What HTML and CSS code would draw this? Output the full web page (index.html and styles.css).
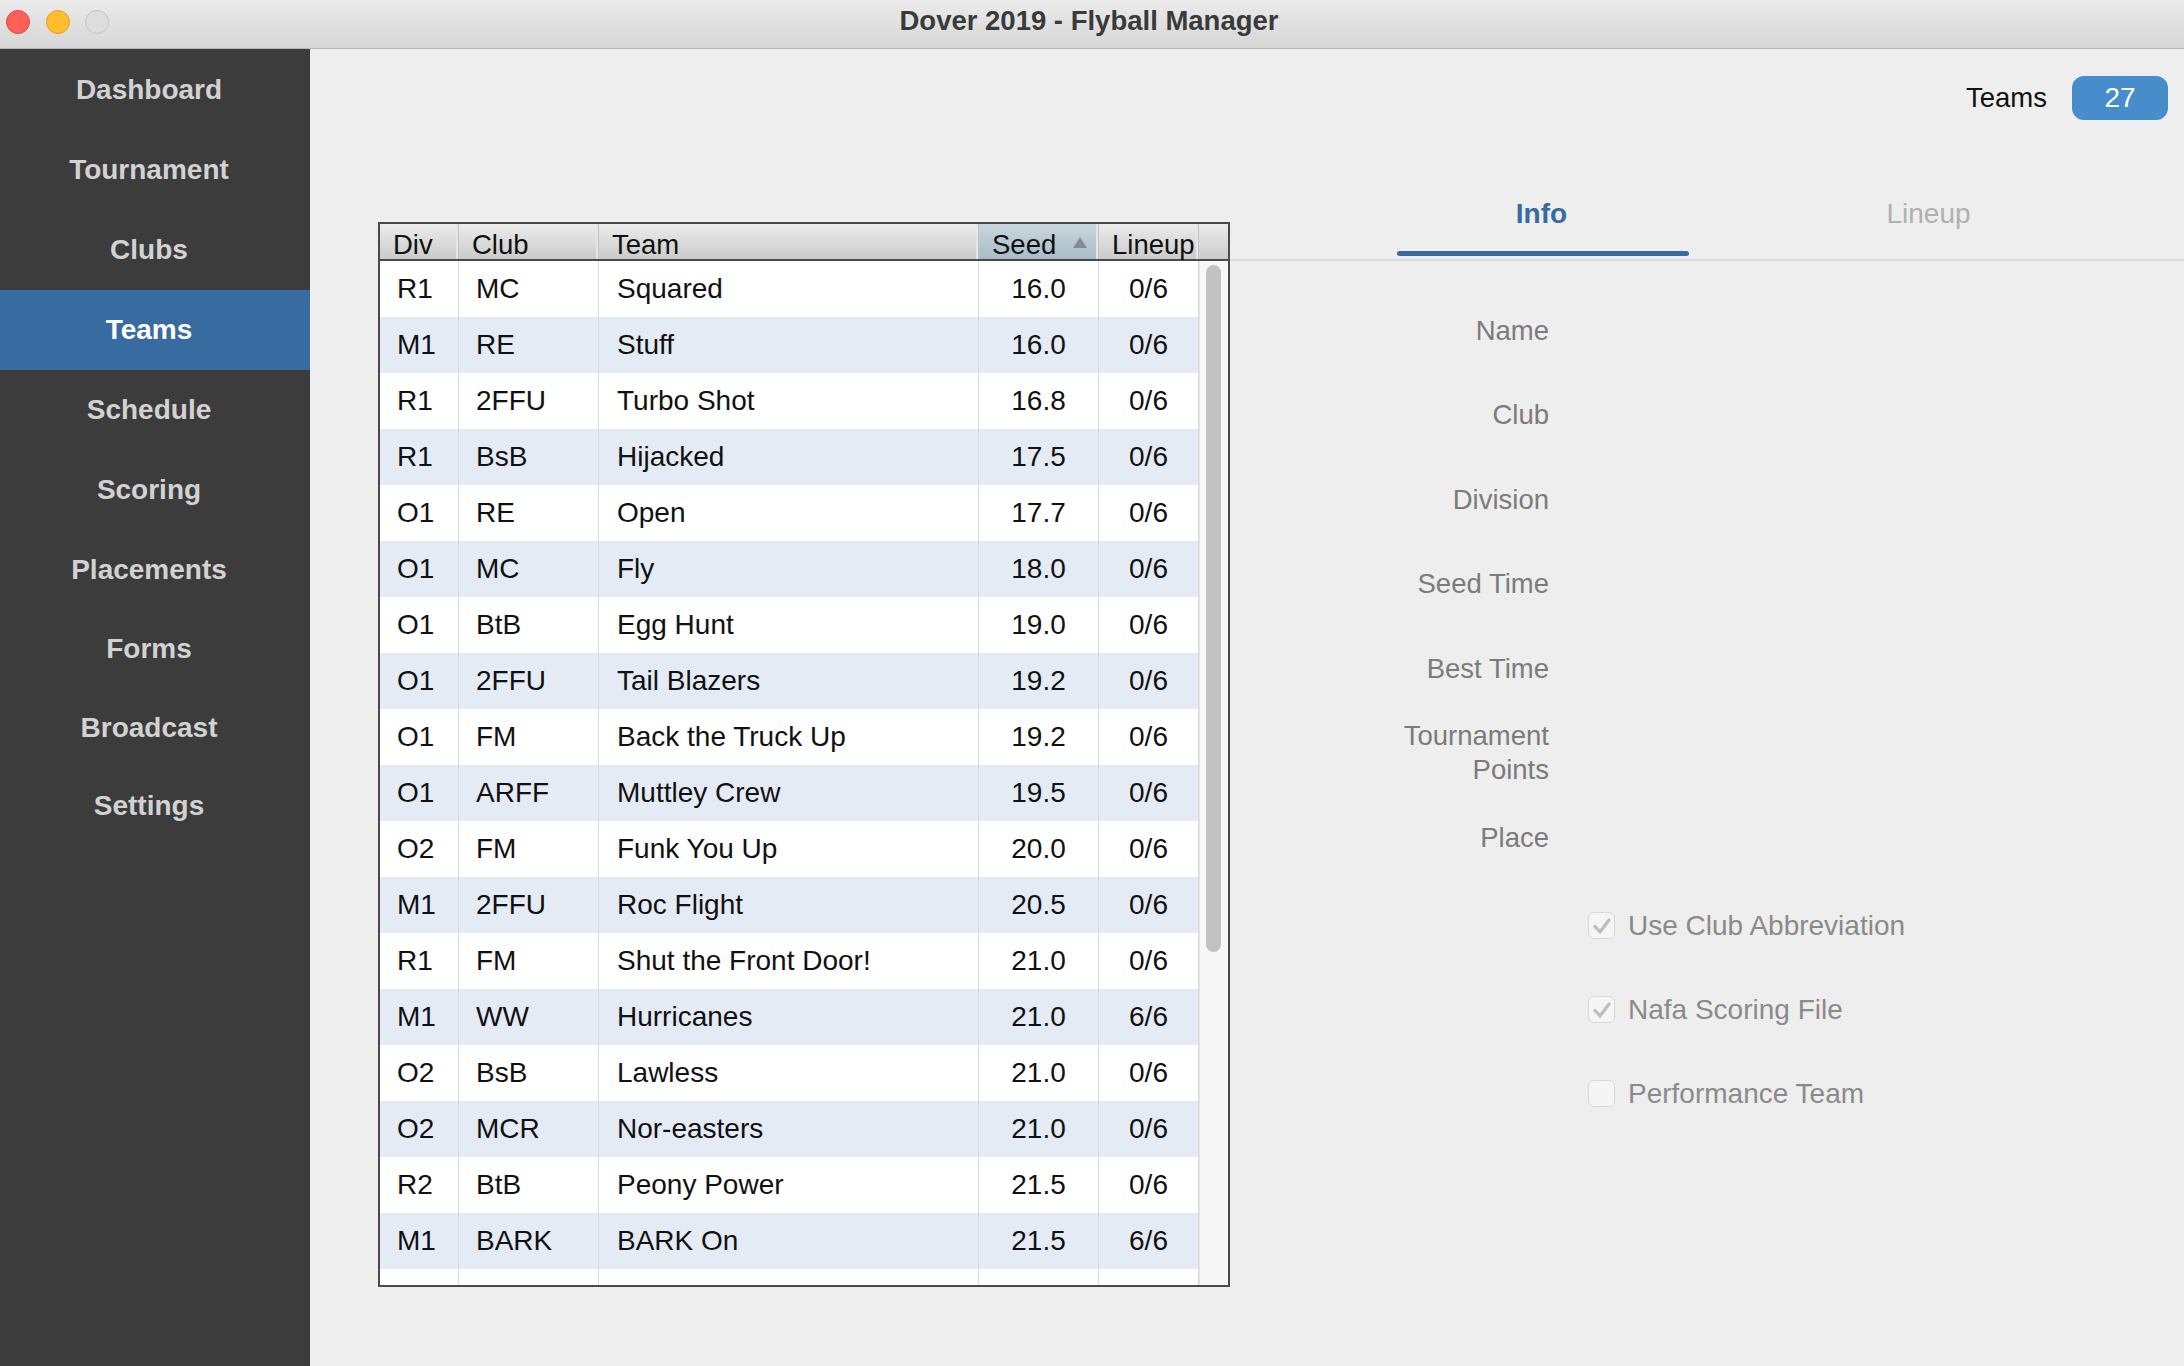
FILE: index.html
```html
<!DOCTYPE html>
<html>
<head>
<meta charset="utf-8">
<title>Dover 2019 - Flyball Manager</title>
<link rel="stylesheet" href="styles.css">
</head>
<body>
<div class="window">
  <header class="titlebar">
    <div class="lights">
      <span class="light red"></span>
      <span class="light yellow"></span>
      <span class="light grey"></span>
    </div>
    <div class="title">Dover 2019 - Flyball Manager</div>
  </header>
  <div class="app">
    <nav class="sidebar">
      <div class="nav-item">Dashboard</div>
      <div class="nav-item">Tournament</div>
      <div class="nav-item">Clubs</div>
      <div class="nav-item active">Teams</div>
      <div class="nav-item">Schedule</div>
      <div class="nav-item">Scoring</div>
      <div class="nav-item">Placements</div>
      <div class="nav-item">Forms</div>
      <div class="nav-item">Broadcast</div>
      <div class="nav-item">Settings</div>
    </nav>
    <main class="main">
      <div class="topbar">
        <span class="count-label">Teams</span>
        <span class="badge">27</span>
      </div>
      <div class="content">
        <section class="grid">
          <div class="grid-head">
            <div class="hcell">Div</div>
            <div class="hcell">Club</div>
            <div class="hcell">Team</div>
            <div class="hcell sorted"><span>Seed</span><span class="sort-arrow"></span></div>
            <div class="hcell">Lineup</div>
            <div class="hcell filler"></div>
          </div>
          <div class="grid-body">
            <div class="rows">
              <div class="row"><div class="c div">R1</div><div class="c club">MC</div><div class="c team">Squared</div><div class="c num">16.0</div><div class="c num">0/6</div></div>
              <div class="row"><div class="c div">M1</div><div class="c club">RE</div><div class="c team">Stuff</div><div class="c num">16.0</div><div class="c num">0/6</div></div>
              <div class="row"><div class="c div">R1</div><div class="c club">2FFU</div><div class="c team">Turbo Shot</div><div class="c num">16.8</div><div class="c num">0/6</div></div>
              <div class="row"><div class="c div">R1</div><div class="c club">BsB</div><div class="c team">Hijacked</div><div class="c num">17.5</div><div class="c num">0/6</div></div>
              <div class="row"><div class="c div">O1</div><div class="c club">RE</div><div class="c team">Open</div><div class="c num">17.7</div><div class="c num">0/6</div></div>
              <div class="row"><div class="c div">O1</div><div class="c club">MC</div><div class="c team">Fly</div><div class="c num">18.0</div><div class="c num">0/6</div></div>
              <div class="row"><div class="c div">O1</div><div class="c club">BtB</div><div class="c team">Egg Hunt</div><div class="c num">19.0</div><div class="c num">0/6</div></div>
              <div class="row"><div class="c div">O1</div><div class="c club">2FFU</div><div class="c team">Tail Blazers</div><div class="c num">19.2</div><div class="c num">0/6</div></div>
              <div class="row"><div class="c div">O1</div><div class="c club">FM</div><div class="c team">Back the Truck Up</div><div class="c num">19.2</div><div class="c num">0/6</div></div>
              <div class="row"><div class="c div">O1</div><div class="c club">ARFF</div><div class="c team">Muttley Crew</div><div class="c num">19.5</div><div class="c num">0/6</div></div>
              <div class="row"><div class="c div">O2</div><div class="c club">FM</div><div class="c team">Funk You Up</div><div class="c num">20.0</div><div class="c num">0/6</div></div>
              <div class="row"><div class="c div">M1</div><div class="c club">2FFU</div><div class="c team">Roc Flight</div><div class="c num">20.5</div><div class="c num">0/6</div></div>
              <div class="row"><div class="c div">R1</div><div class="c club">FM</div><div class="c team">Shut the Front Door!</div><div class="c num">21.0</div><div class="c num">0/6</div></div>
              <div class="row"><div class="c div">M1</div><div class="c club">WW</div><div class="c team">Hurricanes</div><div class="c num">21.0</div><div class="c num">6/6</div></div>
              <div class="row"><div class="c div">O2</div><div class="c club">BsB</div><div class="c team">Lawless</div><div class="c num">21.0</div><div class="c num">0/6</div></div>
              <div class="row"><div class="c div">O2</div><div class="c club">MCR</div><div class="c team">Nor-easters</div><div class="c num">21.0</div><div class="c num">0/6</div></div>
              <div class="row"><div class="c div">R2</div><div class="c club">BtB</div><div class="c team">Peony Power</div><div class="c num">21.5</div><div class="c num">0/6</div></div>
              <div class="row"><div class="c div">M1</div><div class="c club">BARK</div><div class="c team">BARK On</div><div class="c num">21.5</div><div class="c num">6/6</div></div>
              <div class="row"><div class="c div">O1</div><div class="c club">BARK</div><div class="c team">Bark Side</div><div class="c num">21.5</div><div class="c num">0/6</div></div>
            </div>
            <div class="scrolltrack"><div class="thumb"></div></div>
          </div>
        </section>
        <section class="details">
          <div class="tabs">
            <div class="tab active">Info</div>
            <div class="tab">Lineup</div>
          </div>
          <div class="form">
            <div class="label">Name</div><div class="value"></div>
            <div class="label">Club</div><div class="value"></div>
            <div class="label">Division</div><div class="value"></div>
            <div class="label">Seed Time</div><div class="value"></div>
            <div class="label">Best Time</div><div class="value"></div>
            <div class="label two">Tournament<br>Points</div><div class="value"></div>
            <div class="label">Place</div><div class="value"></div>
          </div>
          <div class="checks">
            <div class="check">
              <span class="box"><svg viewBox="0 0 24 24" width="24" height="24"><path d="M5 12.5 L10 18 L19 6" fill="none" stroke="#bdbdbd" stroke-width="3.2" stroke-linecap="round" stroke-linejoin="round"/></svg></span>
              <span class="check-text">Use Club Abbreviation</span>
            </div>
            <div class="check">
              <span class="box"><svg viewBox="0 0 24 24" width="24" height="24"><path d="M5 12.5 L10 18 L19 6" fill="none" stroke="#bdbdbd" stroke-width="3.2" stroke-linecap="round" stroke-linejoin="round"/></svg></span>
              <span class="check-text">Nafa Scoring File</span>
            </div>
            <div class="check">
              <span class="box"></span>
              <span class="check-text">Performance Team</span>
            </div>
          </div>
        </section>
      </div>
    </main>
  </div>
</div>
</body>
</html>
```
FILE: styles.css
```css
* { box-sizing: border-box; }
html, body {
  margin: 0;
  padding: 0;
  width: 2184px;
  height: 1366px;
  overflow: hidden;
  font-family: "Liberation Sans", Arial, Helvetica, sans-serif;
}
.window {
  width: 2184px;
  height: 1366px;
  display: flex;
  flex-direction: column;
  background: #eeeeee;
}
.titlebar {
  height: 49px;
  flex: none;
  background: linear-gradient(#ebebeb, #d6d6d6);
  border-bottom: 1px solid #b5b5b5;
  display: flex;
  align-items: center;
  position: relative;
}
.lights {
  display: flex;
  gap: 15.5px;
  padding-left: 6px;
  margin-top: -4px;
}
.light {
  width: 24px;
  height: 24px;
  border-radius: 50%;
  display: block;
}
.light.red { background: #fe5f57; border: 1px solid #e2463f; }
.light.yellow { background: #febc2e; border: 1px solid #dfa024; }
.light.grey { background: #dddddd; border: 1px solid #c4c4c4; }
.title {
  position: absolute;
  left: 0;
  right: 6px;
  top: 0;
  text-align: center;
  line-height: 42px;
  font-size: 27.5px;
  font-weight: bold;
  color: #3a3a3a;
}
.app {
  flex: 1;
  display: flex;
  min-height: 0;
}
.sidebar {
  width: 310px;
  flex: none;
  background: #3c3c3c;
  padding-top: 1px;
}
.nav-item {
  height: 80px;
  line-height: 80px;
  text-align: center;
  padding-right: 12px;
  font-size: 28px;
  font-weight: bold;
  color: #d2d2d2;
}
.nav-item:nth-child(n+8) { height: 78.5px; line-height: 78.5px; }
.nav-item.active {
  background: #386b9f;
  color: #ffffff;
}
.main {
  flex: 1;
  display: flex;
  flex-direction: column;
  min-width: 0;
}
.topbar {
  display: flex;
  justify-content: flex-end;
  align-items: center;
  gap: 25px;
  padding: 27px 16px 0 0;
  height: 71px;
}
.count-label {
  font-size: 27.5px;
  color: #111111;
}
.badge {
  width: 96px;
  height: 44px;
  border-radius: 12px;
  background: #478ccb;
  color: #ffffff;
  font-size: 28px;
  line-height: 44px;
  text-align: center;
}
.content {
  display: flex;
  align-items: flex-start;
}
.grid {
  margin-left: 68px;
  margin-top: 102px;
  width: 852px;
  height: 1065px;
  border: 2px solid #4a4a4a;
  background: #ffffff;
  display: flex;
  flex-direction: column;
  overflow: hidden;
}
.grid-head {
  display: grid;
  grid-template-columns: 79px 140px 380px 120px 100px 29px;
  height: 37px;
  border-bottom: 2px solid #4a4a4a;
  background: linear-gradient(#ececec, #cbcbcb);
  flex: none;
}
.hcell {
  display: flex;
  align-items: flex-end;
  padding: 0 0 0 13px;
  font-size: 27.5px;
  line-height: 29px;
  color: #111111;
  border-right: 1px solid #c2c2c2;
  box-shadow: inset -2px 0 0 #e6e6e6;
}
.hcell.filler { border-right: none; box-shadow: none; }
.hcell.sorted {
  background: linear-gradient(#c9d6df, #a9bcc7);
  justify-content: space-between;
}
.sort-arrow {
  width: 0;
  height: 0;
  border-left: 7px solid transparent;
  border-right: 7px solid transparent;
  border-bottom: 11px solid #858c90;
  margin: 0 11px 11px 0;
}
.grid-body {
  flex: 1;
  display: flex;
  min-height: 0;
}
.rows {
  width: 819px;
  flex: none;
}
.row {
  display: grid;
  grid-template-columns: 79px 140px 380px 120px 100px;
  height: 56px;
  background: #ffffff;
}
.row:nth-child(even) { background: #e5ebf5; }
.c {
  font-size: 28px;
  line-height: 56px;
  color: #111111;
  border-right: 1px solid #dadada;
  white-space: nowrap;
  overflow: hidden;
}
.c.div { padding-left: 17px; }
.c.club { padding-left: 17px; }
.c.team { padding-left: 18px; }
.c.num { text-align: center; }
.scrolltrack {
  flex: 1;
  background: #f7f7f7;
  border-left: 1px solid #e4e4e4;
  padding: 4px 0 0 6px;
}
.thumb {
  width: 15px;
  height: 687px;
  border-radius: 8px;
  background: #c2c2c2;
}
.details {
  flex: 1;
  margin-top: 62px;
}
.tabs {
  display: flex;
  padding-left: 118px;
  border-bottom: 2px solid #d9d9d9;
}
.tab {
  width: 387px;
  height: 77px;
  padding-top: 16px;
  line-height: 32px;
  text-align: center;
  font-size: 28px;
  color: #b0b0b0;
  position: relative;
}
.tab.active {
  color: #386b9f;
  font-weight: bold;
}
.tab.active::after {
  content: "";
  position: absolute;
  left: 49px;
  right: 46px;
  bottom: 3px;
  height: 5px;
  border-radius: 3px;
  background: #386b9f;
}
.form {
  display: grid;
  grid-template-columns: 319px 1fr;
  grid-auto-rows: 84.5px;
  margin-top: 27px;
  align-items: center;
}
.label {
  text-align: right;
  font-size: 27.5px;
  line-height: 33.5px;
  color: #7b7b7b;
}
.checks {
  margin-top: 4px;
  padding-left: 358px;
}
.check {
  height: 84px;
  display: flex;
  align-items: center;
  gap: 13px;
}
.box {
  width: 27px;
  height: 27px;
  border: 1px solid #d8d8d8;
  border-radius: 6px;
  background: #f5f5f5;
  display: flex;
  align-items: center;
  justify-content: center;
}
.box svg { display: block; }
.check-text {
  font-size: 28px;
  color: #8a8a8a;
}
```
